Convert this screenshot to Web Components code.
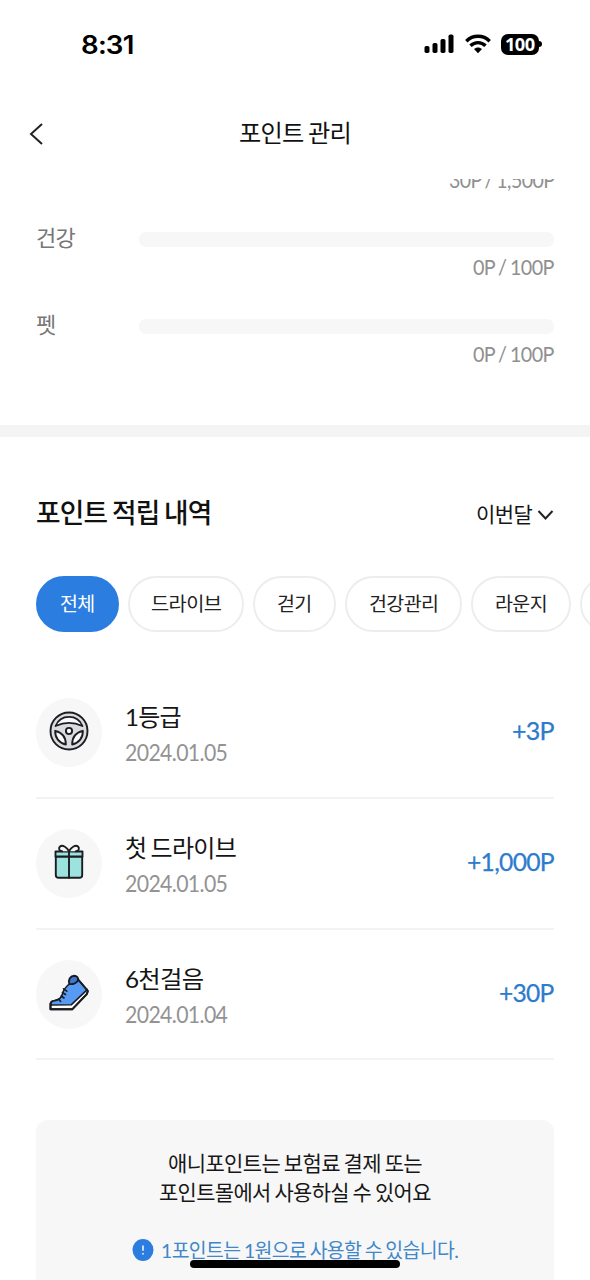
<!DOCTYPE html>
<html lang="ko">
<head>
<meta charset="utf-8">
<title>포인트 관리</title>
<style>
html,body{margin:0;padding:0;background:#fff}
body{width:590px;height:1280px;overflow:hidden;font-family:Lato,"Noto Sans CJK KR",sans-serif;color:#1a1a1a}
</style>
</head>
<body>
<points-app></points-app>
<script>
const define = (name, html, init) => customElements.define(name, class extends HTMLElement {
  connectedCallback() {
    if (this.shadowRoot) return;
    const t = document.createElement('template');
    t.innerHTML = typeof html === 'function' ? html(this) : html;
    this.attachShadow({mode: 'open'}).appendChild(t.content.cloneNode(true));
    if (init) init(this);
  }
});

/* One line of text, condensed to the width given in "w". */
define('fit-text', el => `<style>
:host{display:inline-block;flex:none;width:${el.getAttribute('w')}px;white-space:nowrap;letter-spacing:-.03em;word-spacing:-.05em}
span{display:inline-block;transform-origin:0 50%}
</style><span><slot></slot></span>`, el => {
  const s = el.shadowRoot.querySelector('span');
  s.style.transform = `scaleX(${Number(el.getAttribute('w')) / s.offsetWidth})`;
});

define('status-bar', `<style>
:host{display:flex;height:88px;box-sizing:border-box;padding:0 48px 0 81px;align-items:center;justify-content:space-between;color:#000}
.time{font:600 25px/30px Inter,sans-serif;position:relative;top:1px}
.right{display:flex;align-items:center;gap:10px}
.bat{display:flex;align-items:center}
.body{width:38px;height:21px;border-radius:7px;background:#000;color:#fff;display:flex;align-items:center;justify-content:center;font:700 17px/21px "Open Sans",sans-serif}
.cap{width:3px;height:6px;border-radius:0 3px 3px 0;background:#000;margin-left:0}
svg{display:block}
</style>
<fit-text class="time" w="52">8:31</fit-text>
<div class="right">
<svg width="31" height="20" viewBox="0 0 31 20"><rect x="0.5" y="12" width="5" height="7" rx="1.8"/><rect x="8.5" y="9" width="5" height="10" rx="1.8"/><rect x="16.5" y="5" width="5" height="14" rx="1.8"/><rect x="24.5" y="0.5" width="5" height="18.5" rx="1.8"/></svg>
<svg width="26" height="20" viewBox="0 0 26 20"><g fill="none" stroke="#000" stroke-width="3.4"><path d="M1.3 7.2C7.8 .6 18.2 .6 24.7 7.2"/><path d="M5.5 11.8C9.8 7.6 16.2 7.6 20.5 11.8"/></g><path d="M9 15.1C11.2 13 14.8 13 17 15.1L13 19.2Z"/></svg>
<div class="bat"><div class="body"><fit-text w="30">100</fit-text></div><div class="cap"></div></div>
</div>`);

define('nav-bar', `<style>
:host{display:grid;grid-template-columns:72px 1fr 72px;height:91px;align-items:center}
svg{margin-left:28px;display:block}
div{text-align:center;font-size:24px;line-height:36px;color:#111;position:relative;top:-1px}
</style>
<svg width="18" height="26" viewBox="0 0 18 26" fill="none" stroke="#222" stroke-width="2"><path d="M14 3L3 13L14 23"/></svg>
<div><fit-text w="112"><slot></slot></fit-text></div>`);

define('goal-row', el => `<style>
:host{display:grid;grid-template-columns:103px 1fr;grid-template-rows:30px 28px;height:87px;align-items:center}
.l{font-size:22px;line-height:30px;color:#777;position:relative;top:-1px}
.bar{height:15px;border-radius:7px;background:#f7f7f7}
.v{grid-column:2;text-align:right;font-size:20.5px;line-height:28px;color:#909090;margin-top:-2px}
</style><div class="l"><slot></slot></div><div class="bar"></div>
<div class="v"><fit-text w="${el.getAttribute('w')}">${el.getAttribute('value')}</fit-text></div>`);

define('filter-chip', el => `<style>
:host{display:flex;flex:none;box-sizing:border-box;width:${el.getAttribute('w')}px;height:56px;border:2px solid #ededed;border-radius:28px;align-items:center;justify-content:center;font-size:19.5px;line-height:28px;color:#222}
:host([on]){background:#2b7de0;border-color:#2b7de0;color:#fff}
</style><slot></slot>`);

define('history-row', el => `<style>
:host{display:flex;box-sizing:border-box;height:${el.getAttribute('h')}px;border-bottom:2px solid #f3f3f3;align-items:center;line-height:36px}
.i{width:66px;height:69px;border-radius:50%;background:#f7f7f7;flex:none}
.t{flex:1;margin-left:23px;display:flex;flex-direction:column;padding-top:5px}
.n{font-size:24px;color:#151515}
.d{font-size:22.5px;color:#939393}
.p{font-size:25px;color:#2d7bcc;-webkit-text-stroke:.25px #2d7bcc;margin-top:-5px}
</style><div class="i"><slot name="icon"></slot></div>
<div class="t"><fit-text class="n" w="${el.getAttribute('nw')}">${el.getAttribute('name')}</fit-text><fit-text class="d" w="102">${el.getAttribute('date')}</fit-text></div>
<fit-text class="p" w="${el.getAttribute('pw')}">${el.getAttribute('points')}</fit-text>`);

const svg = b => `<style>:host{display:block}svg{display:block}</style><svg width="66" height="69" viewBox="0 0 66 69" fill="none" stroke="#1b1d22" stroke-width="1.9" stroke-linejoin="round" stroke-linecap="round">${b}</svg>`;
define('icon-wheel', svg(`<circle cx="33" cy="33" r="18.5" fill="#dcdcde"/>
<path fill="#fafafa" d="M19.6 28C22 22 27 18.9 33 18.9S44 22 46.4 28C42 26 37.5 24.9 33 24.9S24 26 19.6 28Z"/>
<path fill="#fafafa" d="M19.2 32.8C18.8 39.5 23 45 29.8 46.5C30 39 26 34.5 19.2 32.8Z"/>
<path fill="#fafafa" d="M46.8 32.8C47.2 39.5 43 45 36.2 46.5C36 39 40 34.5 46.8 32.8Z"/>
<circle cx="33" cy="33" r="3.1" fill="#fafafa"/>`));
define('icon-gift', svg(`<path fill="#9ce2df" d="M19.8 27.5H46.2V46Q46.2 48.8 43.4 48.8H22.6Q19.8 48.8 19.8 46Z"/>
<path fill="#9ce2df" d="M19.5 22.5H46.5V27.5H19.5Z"/>
<path fill="#f7f7f7" d="M33 22.3C30.5 18 26.5 15.5 24 17.5C22 19.5 23.5 22 26 22.3M33 22.3C35.5 18 39.5 15.5 42 17.5C44 19.5 42.5 22 40 22.3"/>
<path d="M33 22.5V48.8"/>`));
define('icon-shoe', svg(`<path fill="#fff" d="M14.5 49.3V43.5C14.8 41.5 16.5 40.8 19 40.6L50.5 29L51.8 31.5L50.8 34.2L36.2 49.3Z"/>
<path fill="#579af4" stroke-width="1.6" d="M15 45C14.6 41.8 16.4 40.8 19 40.6C23.5 40.2 25.3 37.8 26.4 34C27.2 30.4 28.6 28 33.2 24L41.8 19.2L51 29.8L35.2 44.8Z"/>
<path fill="#3f79cf" d="M33.3 24C32 19.8 34 16.2 38 15.8C41 15.8 42.7 18 41.9 20.4C40 23.6 37 24.4 33.3 24Z"/>
<path stroke-width="1.6" d="M27.5 28.8L30.8 31.2M26.4 32.5L29.5 34.5M25.2 36L28 38M23 39.5L24.6 41.5"/>
<path d="M41.9 19.2L51.8 30.8L50.8 34.2L36.2 49.3H14.5V44"/>`));

define('info-card', `<style>
:host{display:block;margin-top:60px;height:220px;border-radius:12px;background:#f7f7f7;padding-top:28px;box-sizing:border-box;text-align:center;font-size:21px;line-height:29px;color:#171717}
.r{display:flex;justify-content:center}
.n{margin-top:29px;color:#4187c9;font-size:20px;align-items:center;gap:7px;height:30px;margin-left:-1px}
svg{display:block}
</style>
<div class="r"><fit-text w="254">애니포인트는 보험료 결제 또는</fit-text></div>
<div class="r"><fit-text w="272">포인트몰에서 사용하실 수 있어요</fit-text></div>
<div class="r n"><svg width="22" height="22" viewBox="0 0 22 22"><ellipse cx="11" cy="11" rx="10.5" ry="11" fill="#2b7de0"/><path d="M11 6.5V11.8M11 14V15.4" stroke="#fff" stroke-width="1.5"/></svg><fit-text w="297">1포인트는 1원으로 사용할 수 있습니다.</fit-text></div>`);

define('points-app', `<style>
:host{display:flex;flex-direction:column;width:590px;height:1280px;overflow:hidden;position:relative;background:#fff}
main{flex:1;min-height:0;overflow:hidden}
.goals{margin-top:-42px;padding:0 36px 27px}
.band{height:12px;background:#f4f4f4}
.hist{padding:56px 36px 0}
.head{display:flex;height:40px;align-items:center;justify-content:space-between}
h2{margin:0;font-size:27px;line-height:40px;font-weight:500;color:#111}
.m{display:flex;align-items:center;gap:5px;font-size:21px;line-height:30px;margin-top:2px;color:#161616}
.m svg{position:relative;top:1px}
.chips{display:flex;gap:9px;margin:43px -36px 36px 0;overflow:hidden}
.home{position:absolute;left:190px;top:1260px;width:210px;height:8px;border-radius:4px;background:#000}
</style>
<status-bar></status-bar>
<nav-bar>포인트 관리</nav-bar>
<main>
<div class="goals">
<goal-row value="30P / 1,500P" w="105"></goal-row>
<goal-row value="0P / 100P" w="81"><fit-text w="39">건강</fit-text></goal-row>
<goal-row value="0P / 100P" w="81"><fit-text w="20">펫</fit-text></goal-row>
</div>
<div class="band"></div>
<section class="hist">
<div class="head"><h2><fit-text w="176">포인트 적립 내역</fit-text></h2>
<div class="m"><fit-text w="56">이번달</fit-text><svg width="17" height="12" viewBox="0 0 17 12" fill="none" stroke="#222" stroke-width="2"><path d="M1.5 2L8.5 9.5L15.5 2"/></svg></div></div>
<div class="chips">
<filter-chip on w="83"><fit-text w="35">전체</fit-text></filter-chip>
<filter-chip w="116"><fit-text w="70">드라이브</fit-text></filter-chip>
<filter-chip w="83"><fit-text w="35">걷기</fit-text></filter-chip>
<filter-chip w="117"><fit-text w="69">건강관리</fit-text></filter-chip>
<filter-chip w="100"><fit-text w="52">라운지</fit-text></filter-chip>
<filter-chip w="83"></filter-chip>
</div>
<history-row h="131" name="1등급" nw="56" date="2024.01.05" points="+3P" pw="42"><icon-wheel slot="icon"></icon-wheel></history-row>
<history-row h="131" name="첫 드라이브" nw="111" date="2024.01.05" points="+1,000P" pw="87"><icon-gift slot="icon"></icon-gift></history-row>
<history-row h="130" name="6천걸음" nw="78" date="2024.01.04" points="+30P" pw="55"><icon-shoe slot="icon"></icon-shoe></history-row>
<info-card></info-card>
</section>
</main>
<div class="home"></div>`);
</script>
</body>
</html>
